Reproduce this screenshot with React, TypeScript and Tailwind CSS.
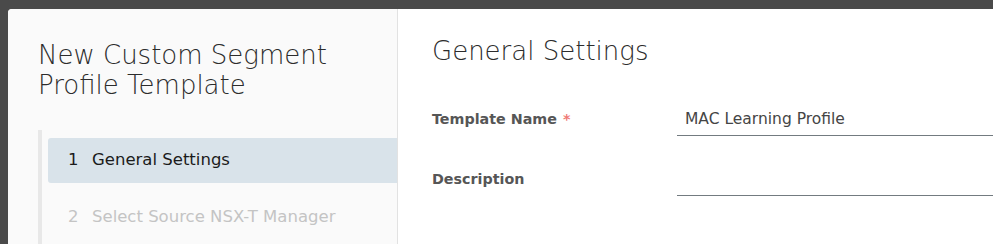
import React from "react";

const font = { fontFamily: "'DejaVu Sans', 'Open Sans', sans-serif" };

function Steps() {
  return (
    <div className="mt-[30px] ml-[30px] border-l-4 border-[#e8e8e8] pl-[6px] pt-[8px]">
      <div className="flex h-[45px] items-center rounded-l-[3px] bg-[#d9e3ea] pl-[20px] text-[16.5px] text-[#1b1b1b]">
        <span className="w-[24px]">1</span>
        <span>General Settings</span>
      </div>
      <div className="flex h-[69px] items-center pl-[20px] text-[16.5px] text-[#c4c4c4]">
        <span className="w-[24px]">2</span>
        <span>Select Source NSX-T Manager</span>
      </div>
    </div>
  );
}

function Field({ label, value, required }: { label: string; value?: string; required?: boolean }) {
  return (
    <div className="flex h-[60px] items-end">
      <div className="w-[245px] pb-[6px] text-[14.3px] font-semibold text-[#565656]">
        {label}
        {required && <span className="ml-[6px] text-[#ef7a76]">*</span>}
      </div>
      <div className="flex-1 border-b border-[#737b80] pb-[4px] pl-[8px] text-[15.5px] text-[#454545]">
        {value ?? "\u00a0"}
      </div>
    </div>
  );
}

export default function App() {
  return (
    <div className="h-[244px] w-[993px] overflow-hidden bg-[#4a4a4a] pt-[9px] pl-[8px]" style={font}>
      <div className="flex h-full overflow-hidden rounded-tl-[4px] bg-white">
        <div className="w-[390px] shrink-0 border-r border-[#e2e2e2] bg-[#fafafa]">
          <h1 className="pl-[30px] pt-[31px] text-[26px] font-extralight leading-[30px] text-[#2c2c2c]">
            New Custom Segment
            <br />
            Profile Template
          </h1>
          <Steps />
        </div>
        <div className="flex-1 pl-[34px]">
          <h2 className="pt-[27px] text-[26px] font-extralight leading-[30px] text-[#2c2c2c]">General Settings</h2>
          <div className="mt-[10px]">
            <Field label="Template Name" value="MAC Learning Profile" required />
            <Field label="Description" />
          </div>
        </div>
      </div>
    </div>
  );
}
